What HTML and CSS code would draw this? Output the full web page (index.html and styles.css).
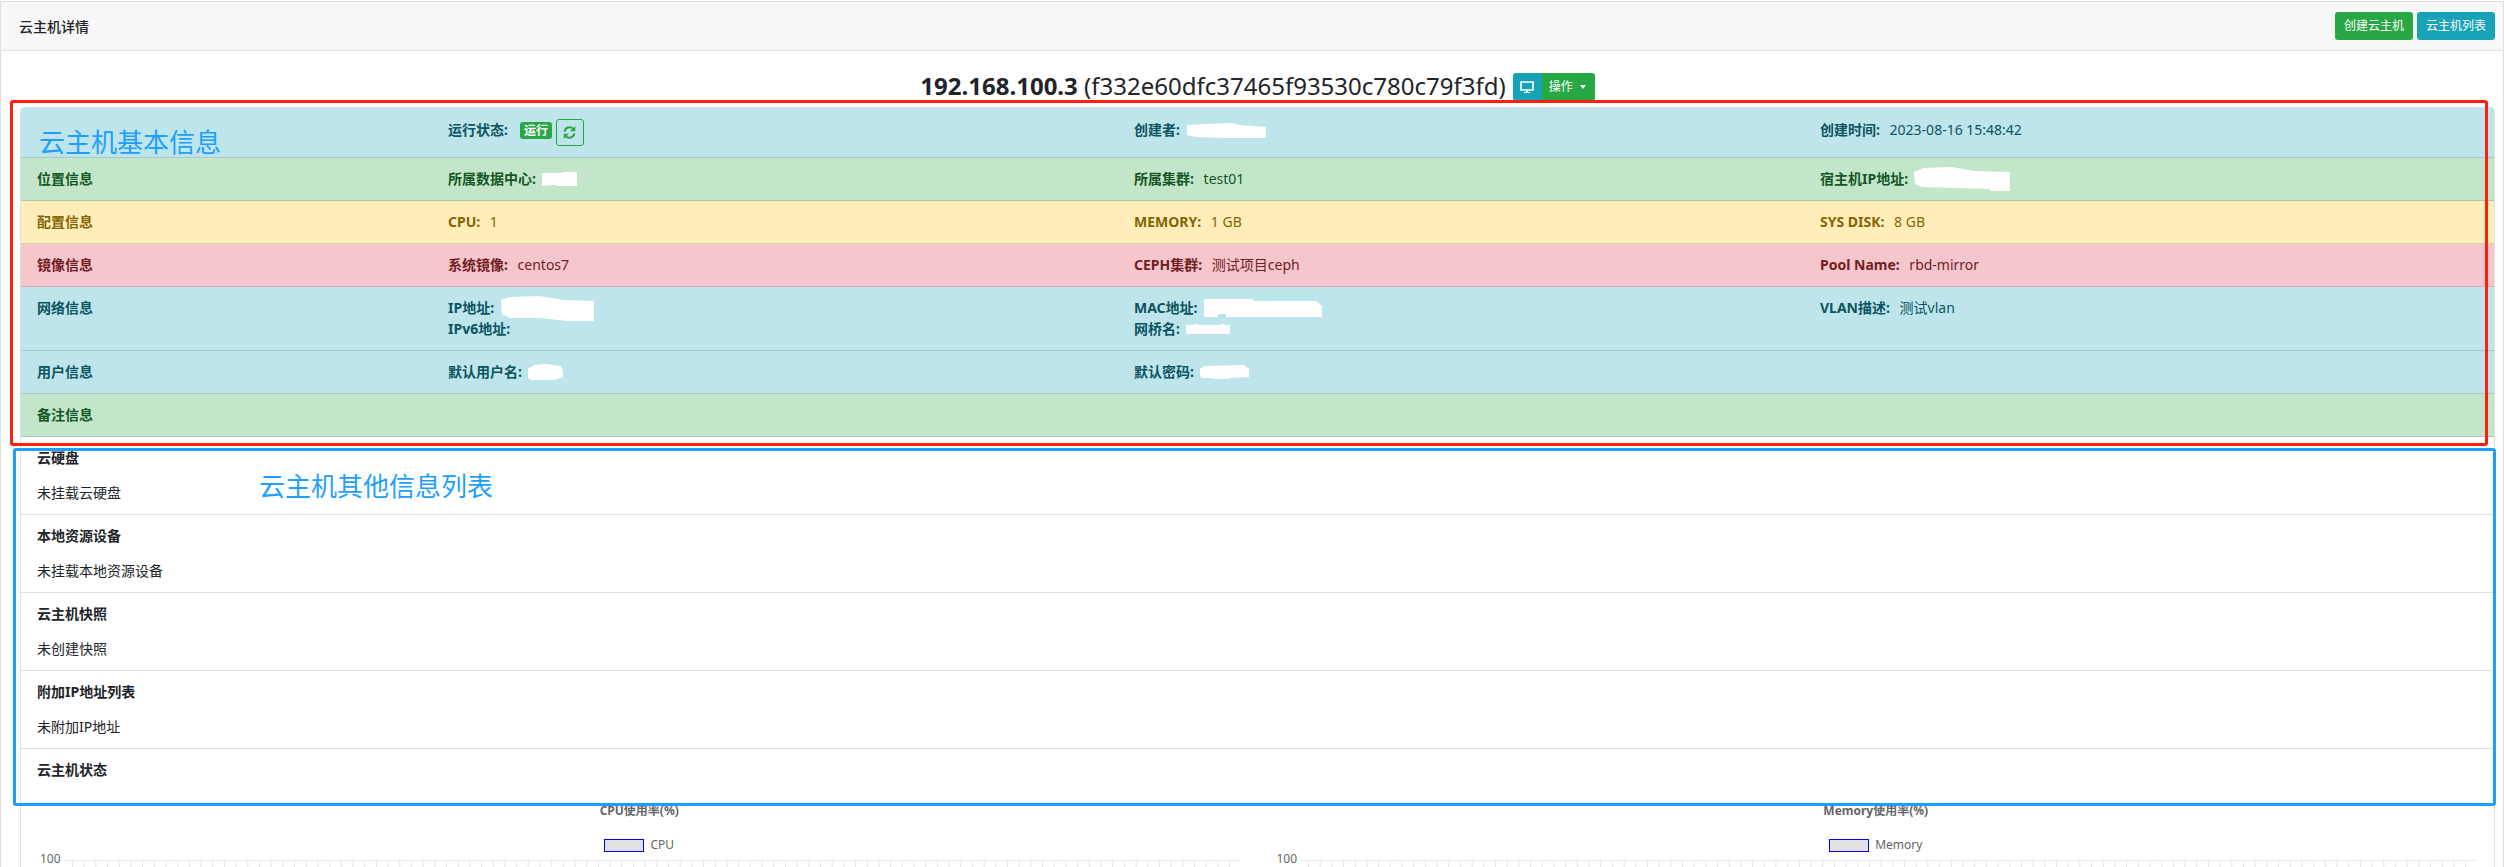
FILE: index.html
```html
<!DOCTYPE html>
<html lang="zh-CN">
<head>
    <meta charset="UTF-8">
    <title>云主机详情</title>
    <link rel="stylesheet" href="styles.css">
</head>
<body>
    <div class="card">
        <div class="card-header">
            <span class="card-title">云主机详情</span>
            <div class="header-btns">
                <a class="btn btn-green">创建云主机</a>
                <a class="btn btn-blue">云主机列表</a>
            </div>
        </div>
        <div class="card-body">
            <div class="vm-title">
                <h4><b>192.168.100.3</b> (f332e60dfc37465f93530c780c79f3fd)</h4>
                <div class="btn-group">
                    <a class="btn btn-blue btn-icon">
                        <svg width="16" height="13" viewBox="0 0 16 13"><path d="M2 1h12v8H2z" fill="none" stroke="#fff" stroke-width="1.6"/><path d="M7 9.5h2V11h2v1H5v-1h2z" fill="#fff"/></svg>
                    </a>
                    <a class="btn btn-green btn-menu">操作<i class="caret"></i></a>
                </div>
            </div>
            <div class="inner-card">
                <div class="info-row row-info row-top">
                    <div></div>
                    <div class="status-cell">
                        <b>运行状态:</b>
                        <span class="badge">运行</span>
                        <a class="btn-refresh">
                            <svg width="13" height="15" viewBox="0 0 13 15"><path d="M1.6 6.6A5 5 0 0 1 10 3.6M11.4 8.4A5 5 0 0 1 3 11.4" fill="none" stroke="#28a745" stroke-width="2"/><path d="M12.3 1v5.2H7.1zM.7 14V8.8h5.2z" fill="#28a745"/></svg>
                        </a>
                    </div>
                    <div><b>创建者:</b><svg class="scrub" width="80" height="15" viewBox="0 0 80 15"><path d="M1 2l20-1 25-1 8 2 26 2v11H40l-30-1-9-2z" fill="#fff"/></svg></div>
                    <div><b>创建时间:</b> 2023-08-16 15:48:42</div>
                </div>
                <div class="info-row row-success">
                    <div><b>位置信息</b></div>
                    <div><b>所属数据中心:</b><svg class="scrub" width="35" height="14" viewBox="0 0 35 14"><path d="M0 1h19l3-1h13v14H14l-2-1-12 1z" fill="#fff"/></svg></div>
                    <div><b>所属集群:</b> test01</div>
                    <div><b>宿主机IP地址:</b><svg class="scrub" width="96" height="24" viewBox="0 0 96 24"><path d="M0 5l10-4 28-1 22 4 36 1v19H76v-2l-34-1L8 20l-7-3z" fill="#fff"/></svg></div>
                </div>
                <div class="info-row row-warning">
                    <div><b>配置信息</b></div>
                    <div><b>CPU:</b> 1</div>
                    <div><b>MEMORY:</b> 1 GB</div>
                    <div><b>SYS DISK:</b> 8 GB</div>
                </div>
                <div class="info-row row-danger">
                    <div><b>镜像信息</b></div>
                    <div><b>系统镜像:</b> centos7</div>
                    <div><b>CEPH集群:</b> 测试项目ceph</div>
                    <div><b>Pool Name:</b> rbd-mirror</div>
                </div>
                <div class="info-row row-info">
                    <div><b>网络信息</b></div>
                    <div>
                        <div><b>IP地址:</b><svg class="scrub" width="95" height="25" viewBox="0 0 95 25"><path d="M1 4l8-3 30-1 25 4 30 1v20H68L40 22H10L2 18z" fill="#fff"/></svg></div>
                        <div><b>IPv6地址:</b></div>
                    </div>
                    <div>
                        <div><b>MAC地址:</b><svg class="scrub" width="118" height="18" viewBox="0 0 118 18"><path d="M0 0h48l2 2h62l6 5v11H22v-3H14v3H0z" fill="#fff"/></svg></div>
                        <div><b>网桥名:</b><svg class="scrub" width="44" height="10" viewBox="0 0 44 10"><path d="M0 1h8V0h3v1h24V0h3v1h6v9H0z" fill="#fff"/></svg></div>
                    </div>
                    <div><b>VLAN描述:</b> 测试vlan</div>
                </div>
                <div class="info-row row-info">
                    <div><b>用户信息</b></div>
                    <div><b>默认用户名:</b><svg class="scrub" width="35" height="16" viewBox="0 0 35 16"><path d="M0 5l6-4 12-1 15 2 2 5v6l-8 3H4l-4-2z" fill="#fff"/></svg></div>
                    <div><b>默认密码:</b><svg class="scrub" width="49" height="14" viewBox="0 0 49 14"><path d="M0 4l4-3 40-1 5 4v8l-18 1-3 1H14l-2-1H2l-2-2z" fill="#fff"/></svg></div>
                    <div></div>
                </div>
                <div class="info-row row-success">
                    <div><b>备注信息</b></div>
                    <div></div>
                    <div></div>
                    <div></div>
                </div>
                <div class="list-item">
                    <h6>云硬盘</h6>
                    <p>未挂载云硬盘</p>
                </div>
                <div class="list-item">
                    <h6>本地资源设备</h6>
                    <p>未挂载本地资源设备</p>
                </div>
                <div class="list-item">
                    <h6>云主机快照</h6>
                    <p>未创建快照</p>
                </div>
                <div class="list-item">
                    <h6>附加IP地址列表</h6>
                    <p>未附加IP地址</p>
                </div>
                <div class="list-item">
                    <h6>云主机状态</h6>
                    <div class="charts">
                        <div class="chart">
                            <div class="chart-title">CPU使用率(%)</div>
                            <div class="chart-legend"><i></i>CPU</div>
                            <div class="chart-plot"><span>100</span><div class="chart-grid"></div></div>
                        </div>
                        <div class="chart">
                            <div class="chart-title">Memory使用率(%)</div>
                            <div class="chart-legend"><i></i>Memory</div>
                            <div class="chart-plot"><span>100</span><div class="chart-grid"></div></div>
                        </div>
                    </div>
                </div>
            </div>
        </div>
    </div>

    <div class="note-box note-red"></div>
    <div class="note-box note-blue"></div>
    <div class="note-text note-text-basic">云主机基本信息</div>
    <div class="note-text note-text-other">云主机其他信息列表</div>
</body>
</html>
```

FILE: styles.css
```css
html, body {
    margin: 0;
    height: 100%;
    overflow: hidden;
}
body {
    position: relative;
    padding-top: 1px;
    box-sizing: border-box;
    background-color: #fff;
    color: #212529;
    font-family: "Noto Sans", "Noto Sans CJK SC", sans-serif;
    font-size: 14px;
    line-height: 21px;
}
a {
    display: inline-block;
}
b {
    font-weight: 700;
}
.card {
    border: 1px solid #dfdfdf;
    border-bottom: none;
    height: 900px;
}
.card-header {
    display: flex;
    justify-content: space-between;
    align-items: center;
    padding: 10px 8px 10px 18px;
    background-color: #f7f7f7;
    border-bottom: 1px solid #dfdfdf;
}
.card-title {
    font-weight: 500;
}
.header-btns {
    display: flex;
    gap: 4px;
}
.btn {
    padding: 4px 8px;
    font-size: 12px;
    line-height: 18px;
    height: 28px;
    box-sizing: border-box;
    border: 1px solid transparent;
    border-radius: 3px;
    color: #fff;
}
.btn-green {
    background-color: #28a745;
}
.btn-blue {
    background-color: #17a2b8;
}
.card-body {
    padding: 0 8px 0 19px;
}
.vm-title {
    display: flex;
    justify-content: center;
    align-items: flex-end;
    gap: 7px;
    padding-top: 22px;
    margin-bottom: 6px;
}
.vm-title h4 {
    margin: 0;
    padding-bottom: 2px;
    font-size: 24px;
    line-height: 26px;
    font-weight: 400;
}
.btn-group {
    display: flex;
}
.btn-icon {
    width: 29px;
    padding: 0;
    display: flex;
    align-items: center;
    justify-content: center;
    border-radius: 3px 0 0 3px;
}
.btn-menu {
    width: 53px;
    padding: 4px 0 4px 6px;
    border-radius: 0 3px 3px 0;
}
.caret {
    display: inline-block;
    margin-left: 7px;
    vertical-align: 2px;
    border-top: 4px solid #fff;
    border-left: 3px solid transparent;
    border-right: 3px solid transparent;
}
.inner-card {
    border: 1px solid #dfdfdf;
    border-radius: 4px;
    overflow: hidden;
}
.info-row {
    display: grid;
    grid-template-columns: 411px 686px 686px 1fr;
    border-bottom: 1px solid rgba(0, 0, 0, 0.125);
}
.info-row > div {
    padding: 10px 16px 11px;
}
.row-top > div {
    padding: 11px 16px 11px;
    height: 27px;
}
.row-info {
    background-color: #bee5eb;
    color: #0c5460;
}
.row-success {
    background-color: #c3e6cb;
    color: #155724;
}
.row-warning {
    background-color: #ffeeba;
    color: #856404;
}
.row-danger {
    background-color: #f5c6cb;
    color: #721c24;
}
.info-row b {
    margin-right: 6px;
}
.status-cell b {
    margin-right: 12px;
}
.status-cell {
    display: flex;
    align-items: flex-start;
}
.badge {
    margin: 3px 4px 0 0;
    padding: 0 4px;
    height: 17px;
    line-height: 17px;
    font-size: 12px;
    font-weight: 700;
    color: #fff;
    background-color: #28a745;
    border-radius: 3px;
}
.btn-refresh {
    display: flex;
    align-items: center;
    justify-content: center;
    width: 28px;
    height: 27px;
    box-sizing: border-box;
    border: 1px solid #28a745;
    border-radius: 3px;
}
.scrub {
    vertical-align: middle;
    margin: -9px 0 -7px;
}
.list-item {
    padding: 10px 16px 11px;
    border-bottom: 1px solid #dfdfdf;
}
.list-item h6 {
    margin: 0 0 14px;
    font-size: 14px;
    line-height: 21px;
    font-weight: 700;
}
.list-item p {
    margin: 0;
}
.charts {
    display: grid;
    grid-template-columns: 1fr 1fr;
    gap: 38px;
    margin-top: 23px;
    padding: 0 3px;
}
.chart {
    display: flex;
    flex-direction: column;
    align-items: center;
    color: #666;
    font-size: 12px;
}
.chart-title {
    line-height: 16px;
    font-weight: 700;
}
.chart-legend {
    display: flex;
    align-items: center;
    gap: 6px;
    margin-top: 19px;
    line-height: 14px;
}
.chart-legend i {
    width: 40px;
    height: 13px;
    box-sizing: border-box;
    border: 1px solid #00f;
    background-color: #e2e2e2;
}
.chart-plot {
    display: flex;
    align-self: stretch;
    gap: 3px;
    line-height: 14px;
}
.chart-grid {
    flex: 1;
    height: 40px;
    margin-top: 8px;
    border-top: 1px solid #e5e5e5;
    background-image: linear-gradient(90deg, #e5e5e5 1px, transparent 1px);
    background-size: 11.7px 100%;
    background-position: 8px 0;
    background-repeat: repeat-x;
}
.note-box {
    position: absolute;
    box-sizing: border-box;
    border: 3px solid;
    border-radius: 3px;
}
.note-red {
    left: 10px;
    top: 100px;
    width: 2478px;
    height: 346px;
    border-color: #ff1f0f;
}
.note-blue {
    left: 13px;
    top: 448px;
    width: 2483px;
    height: 358px;
    border-color: #1e9fff;
}
.note-text {
    position: absolute;
    font-size: 26px;
    line-height: 34px;
    color: #1e9fff;
}
.note-text-basic {
    left: 39px;
    top: 125px;
}
.note-text-other {
    left: 259px;
    top: 469px;
}
```
